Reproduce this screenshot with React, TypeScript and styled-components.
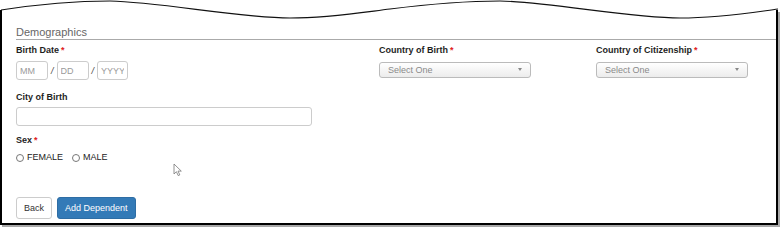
import React from 'react';
import styled, { createGlobalStyle } from 'styled-components';

const GlobalStyle = createGlobalStyle`
  html, body {
    margin: 0;
    padding: 0;
    background: #fff;
  }
  body {
    font-family: "Liberation Sans", Arial, sans-serif;
    color: #333;
  }
`;

const Page = styled.div`
  width: 780px;
  height: 227px;
  padding-top: 10px;
  box-sizing: border-box;
  overflow: hidden;
`;

const Frame = styled.div`
  position: relative;
  box-sizing: border-box;
  width: 778px;
  height: 215px;
  border: 2px solid #000;
  border-top: none;
  box-shadow: 2px 2px 0 #a8a8a8;
  padding: 16px 0 0 14px;
  background: #fff;
`;

const TornEdge = styled.svg`
  position: absolute;
  top: -10px;
  left: -2px;
  width: 780px;
  height: 22px;
  overflow: visible;
`;

const Heading = styled.h3`
  margin: 0;
  font-size: 11px;
  line-height: 13px;
  font-weight: normal;
  color: #666;
  border-bottom: 1px solid #aaa;
`;

const TopRow = styled.div`
  display: grid;
  grid-template-columns: 363px 217px 1fr;
  margin-top: 5px;
`;

const Field = styled.div<{ $gap?: number }>`
  display: flex;
  flex-direction: column;
  margin-top: ${(p) => p.$gap ?? 0}px;
`;

const Label = styled.label<{ $space?: number }>`
  font-size: 9px;
  line-height: 11px;
  font-weight: bold;
  color: #1e1e1e;
  margin-bottom: ${(p) => p.$space ?? 5}px;
`;

const Req = styled.span`
  color: #e02020;
  margin-left: 2px;
`;

const DateRow = styled.div`
  display: flex;
  align-items: center;
  gap: 3px;
`;

const Slash = styled.span`
  font-size: 9px;
  font-style: italic;
  color: #444;
`;

const TextInput = styled.input<{ $w: number }>`
  display: block;
  box-sizing: border-box;
  width: ${(p) => p.$w}px;
  height: 19px;
  margin: 0;
  padding: 0 3px;
  border: 1px solid #ccc;
  border-radius: 3px;
  font-family: "Liberation Sans", Arial, sans-serif;
  font-size: 9px;
  color: #555;
  background: #fff;
  outline: none;
  &::placeholder {
    color: #9a9a9a;
  }
`;

const SelectWrap = styled.div`
  position: relative;
  width: 152px;
  margin-top: 1px;
`;

const Select = styled.select`
  display: block;
  appearance: none;
  box-sizing: border-box;
  width: 100%;
  height: 16px;
  margin: 0;
  padding: 0 0 0 8px;
  border: 1px solid #bbb;
  border-radius: 3px;
  background: linear-gradient(#ffffff, #ececec);
  font-family: "Liberation Sans", Arial, sans-serif;
  font-size: 9px;
  color: #8a8a8a;
  outline: none;
`;

const Caret = styled.span`
  position: absolute;
  right: 9px;
  top: 6px;
  width: 0;
  height: 0;
  border-left: 2.5px solid transparent;
  border-right: 2.5px solid transparent;
  border-top: 3px solid #888;
  pointer-events: none;
`;

const RadioRow = styled.div`
  display: flex;
  align-items: center;
  font-size: 9px;
  line-height: 11px;
  color: #222;
`;

const RadioLabel = styled.label`
  display: flex;
  align-items: center;
  gap: 3px;
  margin-right: 9px;
`;

const Radio = styled.input`
  appearance: none;
  box-sizing: border-box;
  width: 8px;
  height: 8px;
  margin: 0;
  border: 1px solid #777;
  border-radius: 50%;
  background: #fff;
`;

const Actions = styled.div`
  display: flex;
  gap: 5px;
  margin-top: 34px;
`;

const Button = styled.button<{ $primary?: boolean }>`
  box-sizing: border-box;
  height: 22px;
  padding: 0 7px;
  border-radius: 3px;
  border: 1px solid ${(p) => (p.$primary ? '#2e6da4' : '#ccc')};
  background: ${(p) => (p.$primary ? '#337ab7' : '#fff')};
  color: ${(p) => (p.$primary ? '#fff' : '#333')};
  font-family: "Liberation Sans", Arial, sans-serif;
  font-size: 9px;
  cursor: pointer;
`;

const Pointer = styled.svg`
  position: absolute;
  left: 171px;
  top: 153px;
`;

const App: React.FC = () => {
  return (
    <Page>
      <GlobalStyle />
      <Frame>
        <TornEdge viewBox="0 0 780 22">
          <path
            d="M1 10 C 40 4, 75 1, 110 1 C 160 2, 240 18, 290 18 C 330 18, 365 12, 390 9 C 430 4, 465 1, 500 1 C 550 2, 630 18, 680 18 C 720 18, 755 12, 778 9"
            fill="none"
            stroke="#111"
            strokeWidth="1.1"
          />
        </TornEdge>

        <Heading>Demographics</Heading>

        <TopRow>
          <Field>
            <Label>
              Birth Date<Req>*</Req>
            </Label>
            <DateRow>
              <TextInput $w={32} placeholder="MM" />
              <Slash>/</Slash>
              <TextInput $w={32} placeholder="DD" />
              <Slash>/</Slash>
              <TextInput $w={31} placeholder="YYYY" />
            </DateRow>
          </Field>
          <Field>
            <Label>
              Country of Birth<Req>*</Req>
            </Label>
            <SelectWrap>
              <Select defaultValue="">
                <option value="">Select One</option>
              </Select>
              <Caret />
            </SelectWrap>
          </Field>
          <Field>
            <Label>
              Country of Citizenship<Req>*</Req>
            </Label>
            <SelectWrap>
              <Select defaultValue="">
                <option value="">Select One</option>
              </Select>
              <Caret />
            </SelectWrap>
          </Field>
        </TopRow>

        <Field $gap={12}>
          <Label $space={4}>City of Birth</Label>
          <TextInput $w={296} />
        </Field>

        <Field $gap={9}>
          <Label $space={6}>
            Sex<Req>*</Req>
          </Label>
          <RadioRow>
            <RadioLabel>
              <Radio type="radio" name="sex" value="F" />
              FEMALE
            </RadioLabel>
            <RadioLabel>
              <Radio type="radio" name="sex" value="M" />
              MALE
            </RadioLabel>
          </RadioRow>
        </Field>

        <Actions>
          <Button>Back</Button>
          <Button $primary>Add Dependent</Button>
        </Actions>

        <Pointer width="10" height="14" viewBox="0 0 10 14">
          <path
            d="M1 1 L1 11 L3.4 8.7 L5.2 12.6 L6.8 11.9 L5 8.1 L8.3 8.1 Z"
            fill="#fff"
            stroke="#777"
            strokeWidth="0.8"
            strokeLinejoin="round"
          />
        </Pointer>
      </Frame>
    </Page>
  );
};

export default App;
